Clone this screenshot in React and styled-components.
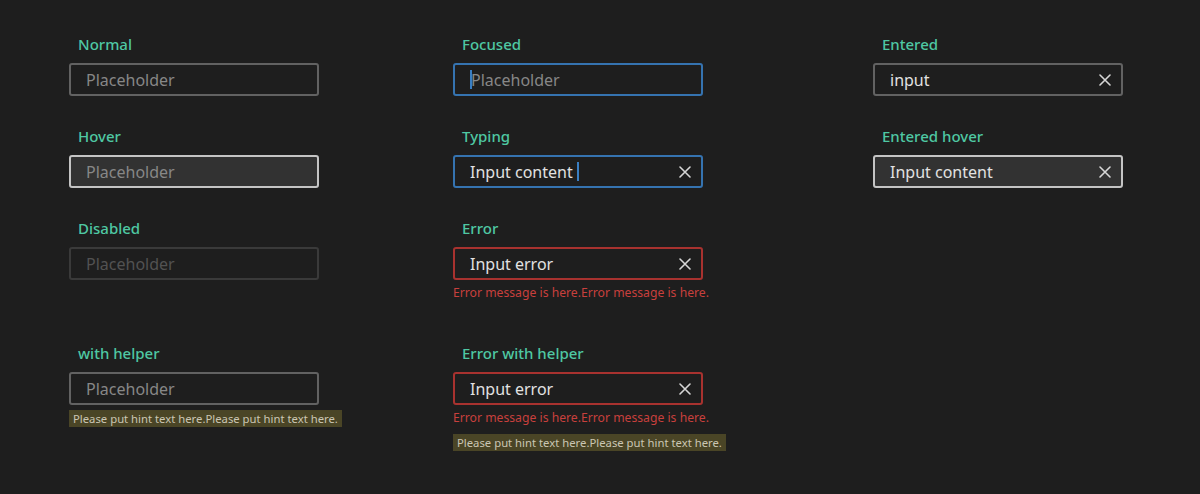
import styled, { createGlobalStyle, css } from "styled-components";

const GlobalStyle = createGlobalStyle`
  html, body {
    margin: 0;
    padding: 0;
    background: #1e1e1e;
  }
  body {
    font-family: "Noto Sans", "Open Sans", sans-serif;
  }
`;

const Page = styled.div`
  width: 1200px;
  height: 494px;
  background: #1e1e1e;
  box-sizing: border-box;
  padding: 34px 0 0 69px;
`;

const Grid = styled.div`
  display: grid;
  grid-template-columns: 384px 420px 250px;
  grid-template-rows: 92px 92px 125px auto;
`;

const Field = styled.div`
  display: flex;
  flex-direction: column;
  align-items: flex-start;
`;

const Label = styled.div`
  color: #4fc8a3;
  font-size: 15px;
  font-weight: 500;
  line-height: 20px;
  height: 20px;
  padding-left: 9px;
  margin-bottom: 9px;
`;

const borders = {
  normal: "#626262",
  hover: "#c4c4c4",
  focus: "#3573b0",
  error: "#a8322f",
  disabled: "#3a3a3a",
};

const Box = styled.div`
  width: 250px;
  height: 33px;
  box-sizing: border-box;
  border: 2px solid ${(p) => borders[p.$state]};
  border-radius: 3px;
  background: ${(p) => (p.$state === "hover" ? "#323232" : "#1e1e1e")};
  display: flex;
  align-items: center;
  padding: 0 10px 0 15px;
`;

const Value = styled.span`
  font-size: 16px;
  line-height: 20px;
  color: ${(p) =>
    p.$tone === "placeholder"
      ? "#878787"
      : p.$tone === "disabled"
      ? "#525252"
      : "#e2e2e2"};
  white-space: nowrap;
`;

const Caret = styled.span`
  display: inline-block;
  width: 2px;
  height: 19px;
  background: #3a7ec2;
  margin: 0 0 0 4px;
  ${(p) =>
    p.$before &&
    css`
      margin: 0 -1px 0 0;
    `}
`;

const Clear = styled.span`
  margin-left: auto;
  display: flex;
  align-items: center;
  color: #d6d6d6;
`;

const ErrorText = styled.div`
  margin-top: 5px;
  font-size: 12.2px;
  line-height: 16px;
  color: #c8403d;
  white-space: nowrap;
`;

const Hint = styled.div`
  margin-top: ${(p) => (p.$afterError ? "8px" : "5px")};
  background: #4a4526;
  color: #cac6b3;
  font-size: 11.3px;
  line-height: 17px;
  padding: 0 4px;
  white-space: nowrap;
`;

const ClearIcon = () => (
  <Clear>
    <svg width="12" height="12" viewBox="0 0 12 12">
      <path d="M1 1 L11 11 M11 1 L1 11" stroke="currentColor" strokeWidth="1.6" strokeLinecap="round" />
    </svg>
  </Clear>
);

const App = () => {
  return (
    <Page>
      <GlobalStyle />
      <Grid>
        <Field>
          <Label>Normal</Label>
          <Box $state="normal">
            <Value $tone="placeholder">Placeholder</Value>
          </Box>
        </Field>
        <Field>
          <Label>Focused</Label>
          <Box $state="focus">
            <Caret $before />
            <Value $tone="placeholder">Placeholder</Value>
          </Box>
        </Field>
        <Field>
          <Label>Entered</Label>
          <Box $state="normal">
            <Value>input</Value>
            <ClearIcon />
          </Box>
        </Field>

        <Field>
          <Label>Hover</Label>
          <Box $state="hover">
            <Value $tone="placeholder">Placeholder</Value>
          </Box>
        </Field>
        <Field>
          <Label>Typing</Label>
          <Box $state="focus">
            <Value>Input content</Value>
            <Caret />
            <ClearIcon />
          </Box>
        </Field>
        <Field>
          <Label>Entered hover</Label>
          <Box $state="hover">
            <Value>Input content</Value>
            <ClearIcon />
          </Box>
        </Field>

        <Field>
          <Label>Disabled</Label>
          <Box $state="disabled">
            <Value $tone="disabled">Placeholder</Value>
          </Box>
        </Field>
        <Field>
          <Label>Error</Label>
          <Box $state="error">
            <Value>Input error</Value>
            <ClearIcon />
          </Box>
          <ErrorText>Error message is here.Error message is here.</ErrorText>
        </Field>
        <Field />

        <Field>
          <Label>with helper</Label>
          <Box $state="normal">
            <Value $tone="placeholder">Placeholder</Value>
          </Box>
          <Hint>Please put hint text here.Please put hint text here.</Hint>
        </Field>
        <Field>
          <Label>Error with helper</Label>
          <Box $state="error">
            <Value>Input error</Value>
            <ClearIcon />
          </Box>
          <ErrorText>Error message is here.Error message is here.</ErrorText>
          <Hint $afterError>Please put hint text here.Please put hint text here.</Hint>
        </Field>
        <Field />
      </Grid>
    </Page>
  );
};

export default App;
